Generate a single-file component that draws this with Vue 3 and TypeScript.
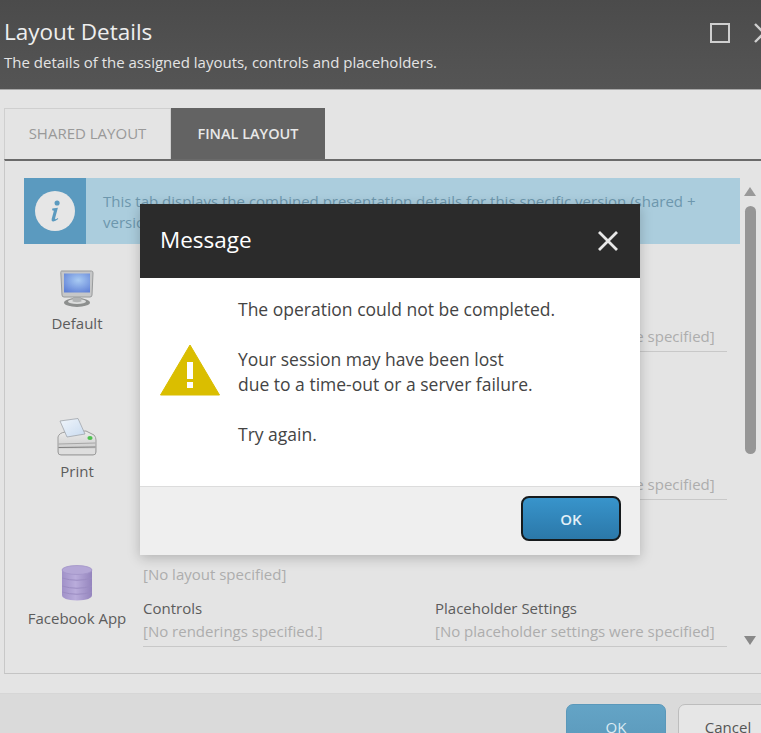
<script setup lang="ts">
interface Row { name: string; icon: string }
const rows: Row[] = [
  { name: 'Default', icon: 'monitor' },
  { name: 'Print', icon: 'printer' },
  { name: 'Facebook App', icon: 'db' },
]
</script>

<template>
  <div class="page">
    <header class="head">
      <div>
        <h1>Layout Details</h1>
        <p>The details of the assigned layouts, controls and placeholders.</p>
      </div>
      <div class="win">
        <span class="max"></span>
        <svg class="winx" width="20" height="20" viewBox="0 0 20 20"><path d="M1 1 L19 19 M19 1 L1 19" stroke="#cfcfcf" stroke-width="2.4" fill="none"/></svg>
      </div>
    </header>

    <main class="main">
      <nav class="tabs">
        <div class="tab">SHARED LAYOUT</div>
        <div class="tab active">FINAL LAYOUT</div>
      </nav>
      <section class="panel">
        <div class="scroll">
          <div class="info">
            <div class="info-icon">
              <span class="circle">
                <svg width="13" height="24" viewBox="0 0 16 30"><circle cx="10" cy="5" r="3.2" fill="#5b9abf"/><path d="M4 12 L11 11 L7.5 24 Q7.3 25.6 9 25 L11 23.8 L11.4 25 Q7.5 28.4 4.6 28 Q2.6 27.6 3.2 25 L6 14.6 L3.8 14 Z" fill="#5b9abf"/></svg>
              </span>
            </div>
            <p>This tab displays the combined presentation details for this specific version (shared + version).</p>
          </div>
          <div v-for="r in rows" :key="r.name" class="row">
            <div class="device">
              <div class="dicon">
                <svg v-if="r.icon === 'monitor'" width="34" height="38" viewBox="0 0 34 38">
                  <defs><radialGradient id="scr" cx="0.55" cy="0.35" r="0.75"><stop offset="0" stop-color="#a9cbf3"/><stop offset="1" stop-color="#5f80d6"/></radialGradient></defs>
                  <ellipse cx="17" cy="32.5" rx="13" ry="4.4" fill="#8d8f8e"/>
                  <ellipse cx="17" cy="31.5" rx="9" ry="2.4" fill="#dcdddd"/>
                  <path d="M13.5 26 L20.5 26 L21.5 31.5 Q17 33 12.5 31.5 Z" fill="#b2b4b4"/>
                  <path d="M1.5 1 L31.5 1 Q33 1 33 3 L32 25 Q32 27 30 27 L4 27 Q2 27 2 25 L0.8 2.5 Q0.8 1 1.5 1 Z" fill="#c6c7c8" stroke="#989a9b"/>
                  <rect x="4" y="3.5" width="26" height="19" fill="url(#scr)"/>
                </svg>
                <svg v-else-if="r.icon === 'printer'" width="40" height="39" viewBox="0 0 40 39">
                  <defs>
                    <linearGradient id="prn" x1="0" y1="0" x2="0" y2="1"><stop offset="0" stop-color="#ececec"/><stop offset="1" stop-color="#c2c2c2"/></linearGradient>
                    <linearGradient id="ppr" x1="0" y1="0" x2="1" y2="1"><stop offset="0" stop-color="#f0f5fb"/><stop offset="1" stop-color="#c9dbf0"/></linearGradient>
                  </defs>
                  <path d="M1 19 Q2 15 8 14 L29 13 L37 17 Q39 19 39 22 L39 34 Q39 37 36 37 L4 37 Q1 37 1 34 Z" fill="url(#prn)" stroke="#9c9c9c"/>
                  <path d="M3 3 L21 0.5 L28 16 L10 19 Z" fill="url(#ppr)" stroke="#a0a5ab" stroke-width="0.8"/>
                  <path d="M1.5 26 L38.5 25" stroke="#a6a6a6" stroke-width="1" fill="none"/>
                  <path d="M1.5 29.5 L38.5 29" stroke="#7f7f7f" stroke-width="1.2" fill="none"/>
                  <rect x="2" y="30.5" width="36" height="5.5" fill="#dedede"/>
                  <ellipse cx="33" cy="20" rx="2.6" ry="1.9" fill="#4fc04f"/>
                </svg>
                <svg v-else width="32" height="36" viewBox="0 0 32 36">
                  <defs><linearGradient id="cyl" x1="0" y1="0" x2="1" y2="0"><stop offset="0" stop-color="#a091c8"/><stop offset="0.45" stop-color="#b9acdb"/><stop offset="1" stop-color="#9484bd"/></linearGradient></defs>
                  <path d="M1 5 L1 30 Q1 35 16 35.5 Q31 35 31 30 L31 5 Z" fill="url(#cyl)"/>
                  <ellipse cx="16" cy="5" rx="15" ry="4.5" fill="#b4a7d6" stroke="#a294c8" stroke-width="0.8"/>
                  <path d="M1 13 Q16 17.5 31 13 M1 21 Q16 25.5 31 21 M1 27 Q16 31.5 31 27" stroke="#9b8cc2" fill="none"/>
                </svg>
              </div>
              <span>{{ r.name }}</span>
            </div>
            <div class="details">
              <div class="muted name">[No layout specified]</div>
              <div class="cols">
                <div class="col">
                  <div class="label">Controls</div>
                  <div class="muted">[No renderings specified.]</div>
                </div>
                <div class="col">
                  <div class="label">Placeholder Settings</div>
                  <div class="muted">[No placeholder settings were specified]</div>
                </div>
              </div>
            </div>
          </div>
        </div>
        <aside class="bar">
          <i class="up"></i>
          <i class="thumb"></i>
          <i class="down"></i>
        </aside>
      </section>
    </main>

    <footer class="foot">
      <button class="fbtn ok">OK</button>
      <button class="fbtn cancel">Cancel</button>
    </footer>

    <div class="dialog">
      <div class="dlg-head">
        <span>Message</span>
        <svg width="22" height="22" viewBox="0 0 22 22"><path d="M2 2 L20 20 M20 2 L2 20" stroke="#e8e8e8" stroke-width="2.8" fill="none"/></svg>
      </div>
      <div class="dlg-body">
        <svg class="warn" width="62" height="52" viewBox="0 0 62 52">
          <path d="M31 1 L60.5 51 L1.5 51 Z" fill="#dabe00" stroke="#dabe00" stroke-width="1" stroke-linejoin="round"/>
          <rect x="28" y="18" width="6" height="17" fill="#fff"/>
          <rect x="28" y="38" width="6" height="6" fill="#fff"/>
        </svg>
        <div class="dlg-text">
          <p>The operation could not be completed.</p>
          <p>Your session may have been lost<br>due to a time-out or a server failure.</p>
          <p>Try again.</p>
        </div>
      </div>
      <div class="dlg-foot">
        <button class="dlg-ok">OK</button>
      </div>
    </div>
  </div>
</template>

<style>
html, body { margin: 0; padding: 0; }
</style>

<style scoped>
.page {
  position: relative;
  width: 761px;
  height: 733px;
  overflow: hidden;
  display: flex;
  flex-direction: column;
  background: #e4e4e4;
  font-family: "Open Sans", "Liberation Sans", sans-serif;
  color: #555;
}
.head {
  height: 89px;
  flex: none;
  box-sizing: content-box;
  border-bottom: 1px solid #a8a8a8;
  background: linear-gradient(#4b4b4b, #555);
  display: flex;
  justify-content: space-between;
  padding-left: 4px;
  color: #eee;
}
.head h1 { margin: 16px 0 0; font-size: 22.5px; font-weight: 400; line-height: 32px; color: #eee; }
.head p { margin: 4px 0 0; font-size: 15px; line-height: 20px; color: #e4e4e4; }
.win { display: flex; gap: 24px; padding-top: 22px; align-items: flex-start; margin-right: -13px; }
.max { width: 16px; height: 16px; border: 2px solid #cfcfcf; display: block; margin-top: 1px; }
.winx { display: block; margin-top: 1px; }
.main { flex: none; height: 603px; padding: 18px 0 0 4px; box-sizing: border-box; display: flex; flex-direction: column; }
.tabs { display: flex; height: 51px; flex: none; }
.tab {
  box-sizing: border-box;
  width: 167px;
  border: 1px solid #cfcfcf;
  border-bottom: none;
  font-size: 15px;
  color: #999;
  text-align: center;
  line-height: 49px;
}
.tab.active { width: 154px; background: #636363; border-color: #636363; color: #e8e8e8; font-weight: 600; font-size: 14.5px; }
.panel {
  flex: 1;
  min-height: 0;
  border-top: 2px solid #6a6a6a;
  border-left: 1px solid #c8c8c8;
  border-bottom: 1px solid #c4c4c4;
  display: flex;
  box-sizing: border-box;
  height: 515px;
  margin-bottom: 19px;
}
.scroll { width: 716px; margin-left: 19px; padding-top: 17px; overflow: hidden; flex: none; }
.info { display: flex; height: 66px; background: #abcddd; color: #6d97ad; }
.info-icon { width: 62px; flex: none; background: #5b9abf; display: flex; align-items: center; justify-content: center; }
.circle { width: 40px; height: 40px; border-radius: 50%; background: #e6e6e6; display: flex; align-items: center; justify-content: center; }
.info p { margin: 13px 30px 0 17px; font-size: 15px; line-height: 21px; }
.row { display: flex; height: 82px; margin-top: 65.5px; }
.info + .row { margin-top: 26px; }
.device { width: 106px; flex: none; display: flex; flex-direction: column; align-items: center; font-size: 15px; color: #5c5c5c; }
.dicon { height: 43px; flex: none; }
.dicon svg { display: block; filter: blur(0.4px); }
.device span { white-space: nowrap; line-height: 20px; }
.details { width: 584px; margin-left: 13px; border-bottom: 1px solid #c8c8c8; box-sizing: border-box; height: 82px; }
.muted { font-size: 15px; color: #adadad; line-height: 20px; white-space: nowrap; }
.name { margin-bottom: 14px; margin-top: -1px; }
.cols { display: flex; }
.col { width: 292px; }
.label { font-size: 15px; color: #5c5c5c; line-height: 20px; margin-bottom: 3px; }
.bar { width: 20px; padding-top: 26px; height: 480px; display: flex; flex-direction: column; align-items: center; }
.up, .down { width: 0; height: 0; border-left: 6px solid transparent; border-right: 6px solid transparent; display: block; }
.up { border-bottom: 9px solid #999; }
.thumb { width: 11px; height: 248px; background: #969696; border-radius: 6px; margin-top: 10px; display: block; }
.down { border-top: 9px solid #888; margin-top: 182px; }
.foot {
  flex: 1;
  background: #dadada;
  border-top: 1px solid #d6d6d6;
  display: flex;
  gap: 12px;
  padding: 10px 0 0 566px;
}
.fbtn { width: 100px; height: 46px; flex: none; border-radius: 7px; font: 400 15px "Open Sans", sans-serif; padding: 0; box-sizing: border-box; }
.ok { background: linear-gradient(#64a4c6, #5a98ba); border: 1px solid #5a98ba; color: #dcebf3; }
.cancel { background: #e6e6e6; border: 1px solid #bdbdbd; color: #555; }
.dialog {
  position: absolute;
  left: 140px;
  top: 204px;
  width: 500px;
  box-shadow: 0 3px 12px rgba(0,0,0,.22);
  display: flex;
  flex-direction: column;
}
.dlg-head {
  height: 74px;
  background: #2b2b2b;
  color: #fff;
  display: flex;
  align-items: center;
  justify-content: space-between;
  padding: 0 21px 3px 20px;
  font-size: 22.5px;
  box-sizing: border-box;
}
.dlg-head svg { margin-top: 3px; }
.dlg-body {
  height: 208px;
  background: #fff;
  display: flex;
  align-items: center;
  box-sizing: border-box;
  padding: 0 0 24px 19px;
}
.warn { flex: none; margin-right: 17px; }
.dlg-text { font-size: 17.5px; line-height: 25px; color: #444; padding-top: 4px; }
.dlg-text p { margin: 0 0 25px; }
.dlg-text p:last-child { margin-bottom: 0; }
.dlg-foot {
  height: 69px;
  box-sizing: border-box;
  background: #efefef;
  border-top: 1px solid #dcdcdc;
  display: flex;
  justify-content: flex-end;
  padding: 9px 19px 0 0;
}
.dlg-ok {
  width: 100px;
  height: 45px;
  box-sizing: border-box;
  border: 2px solid #161a1c;
  border-radius: 8px;
  background: linear-gradient(#3894cb, #2b78a9);
  color: #e3f0f7;
  font: 600 15px "Open Sans", sans-serif;
  padding: 0;
}
</style>
